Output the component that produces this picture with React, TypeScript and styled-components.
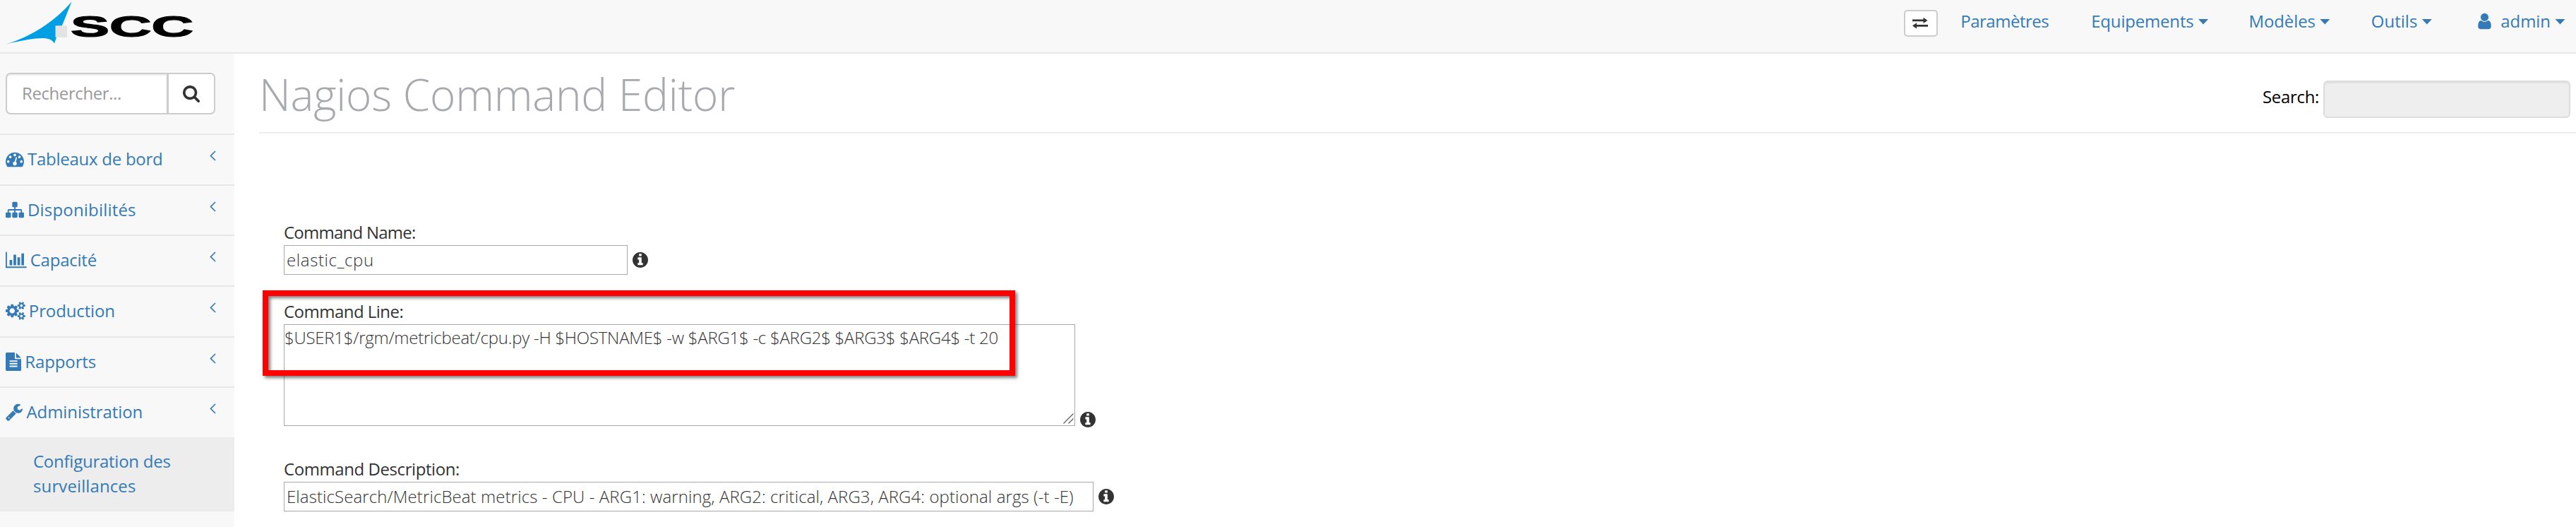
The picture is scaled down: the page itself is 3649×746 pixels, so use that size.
import React from 'react';
import styled, { createGlobalStyle } from 'styled-components';

const GlobalStyle = createGlobalStyle`
  *, *::before, *::after { box-sizing: border-box; }
  body {
    margin: 0;
    background: #fff;
    color: #333;
    font-family: "Open Sans", "Noto Sans", sans-serif;
    font-size: 24px;
    line-height: 35px;
    overflow: hidden;
  }
`;

const Page = styled.div`
  display: flex;
  flex-direction: column;
  width: 3649px;
  height: 746px;
  overflow: hidden;
`;

const TopBar = styled.header`
  display: flex;
  align-items: flex-start;
  flex: none;
  height: 76px;
  padding-right: 15px;
  background: #f8f8f8;
  border-bottom: 2px solid #e7e7e7;
`;

const Logo = styled.svg`
  display: block;
  flex: none;
  width: 290px;
  height: 74px;
`;

const NavList = styled.nav`
  display: flex;
  align-items: flex-start;
  margin-left: auto;
`;

const SwapButton = styled.button`
  display: flex;
  align-items: center;
  justify-content: center;
  width: 48px;
  height: 38px;
  margin: 14px 32px 0 0;
  padding: 0 2px 2px 0;
  background: #fff;
  border: 2px solid #ccc;
  border-radius: 5px;
`;

const NavItem = styled.a<{ $gap?: number }>`
  display: flex;
  align-items: center;
  height: 35px;
  margin-top: 12px;
  margin-left: ${(p) => p.$gap ?? 0}px;
  color: #337ab7;
`;

const Text = styled.span<{ $track?: number }>`
  white-space: nowrap;
  letter-spacing: ${(p) => p.$track ?? 0}px;
`;

const Caret = styled.span`
  width: 15px;
  height: 8px;
  margin: 2px 0 0 6px;
  background: currentColor;
  clip-path: polygon(0 0, 100% 0, 50% 100%);
`;

const UserIcon = styled.svg`
  width: 19px;
  height: 26px;
  margin-right: 13px;
`;

const Body = styled.div`
  display: flex;
  flex: 1;
  min-height: 0;
`;

const Sidebar = styled.aside`
  flex: none;
  width: 332px;
  background: #f8f8f8;
`;

const SearchBox = styled.div`
  display: flex;
  height: 115px;
  padding: 27px 27px 27px 8px;
  border-bottom: 2px solid #e7e7e7;
`;

const SearchField = styled.div`
  flex: 1;
  height: 59px;
  padding: 9px 0 0 21px;
  color: #999;
  background: #fff;
  border: 2px solid #ccc;
  border-radius: 7px 0 0 7px;
  box-shadow: inset 0 2px 2px rgba(0, 0, 0, 0.07);
`;

const SearchButton = styled.button`
  display: flex;
  align-items: center;
  justify-content: center;
  width: 69px;
  height: 59px;
  margin-left: -3px;
  padding: 0;
  background: #fff;
  border: 2px solid #ccc;
  border-left-width: 3px;
  border-radius: 0 7px 7px 0;
`;

const MenuItem = styled.div<{ $last?: boolean }>`
  display: flex;
  align-items: flex-start;
  height: ${(p) => (p.$last ? 69.6 : 71.7)}px;
  padding: 16px 26px 0 8px;
  color: #337ab7;
  border-bottom: ${(p) => (p.$last ? 'none' : '2px solid #e7e7e7')};
`;

const MenuIcon = styled.svg`
  display: block;
  flex: none;
  height: 26px;
  margin: 5px 5px 0 0;
`;

const Chevron = styled.svg`
  display: block;
  width: 9px;
  height: 15px;
  margin: 6px 0 0 auto;
`;

const SubMenu = styled.div`
  height: 105px;
  padding: 16px 0 0 47px;
  color: #337ab7;
  background: #ededed;
`;

const SubLine = styled.div<{ $track: number }>`
  letter-spacing: ${(p) => p.$track}px;
  white-space: nowrap;
`;

const Main = styled.main`
  flex: 1;
  min-width: 0;
  padding-left: 35px;
`;

const PageHead = styled.div`
  display: flex;
  justify-content: space-between;
  height: 113px;
  padding-right: 8px;
  border-bottom: 2px solid #eee;
`;

const Title = styled.h1`
  margin: 13px 0 0;
  font-size: 62px;
  font-weight: 300;
  line-height: 88px;
  letter-spacing: -0.2px;
  color: #a7a9ac;
  white-space: nowrap;
`;

const TableFilter = styled.label`
  display: flex;
  align-items: flex-start;
  gap: 6px;
  padding-top: 38px;
  color: #000;
`;

const FilterLabel = styled.span`
  padding-top: 5px;
  letter-spacing: -0.33px;
`;

const FilterInput = styled.div`
  width: 350px;
  height: 53px;
  background: #eee;
  border: 2px solid #ddd;
  border-radius: 6px;
  box-shadow: inset 0 2px 2px rgba(0, 0, 0, 0.06);
`;

const Form = styled.div`
  position: relative;
  display: flex;
  flex-direction: column;
  padding: 122px 0 0 35px;
`;

const Field = styled.div<{ $space?: number }>`
  margin-bottom: ${(p) => p.$space ?? 0}px;
`;

const FieldLabel = styled.div<{ $track: number }>`
  height: 36px;
  font-weight: 500;
  letter-spacing: ${(p) => p.$track}px;
`;

const FieldRow = styled.div<{ $align: 'center' | 'flex-end' }>`
  display: flex;
  align-items: ${(p) => p.$align};
  gap: 7px;
`;

const Input = styled.div<{ $width: number; $track: number }>`
  width: ${(p) => p.$width}px;
  height: 42px;
  padding: 2px 0 0 3px;
  font-weight: 300;
  letter-spacing: ${(p) => p.$track}px;
  white-space: nowrap;
  background: #fff;
  border: 1px solid #a9a9a9;
`;

const Area = styled.div`
  display: flex;
  align-items: flex-start;
  justify-content: space-between;
  width: 1121px;
  height: 144px;
  font-weight: 300;
  background: #fff;
  border: 1px solid #a9a9a9;
`;

const Grip = styled.svg`
  align-self: flex-end;
  width: 15px;
  height: 15px;
  margin: 0 1px 2px 0;
`;

const Info = styled.svg<{ $drop?: number }>`
  display: block;
  width: 22px;
  height: 22px;
  margin-bottom: ${(p) => -(p.$drop ?? 0)}px;
`;

const Highlight = styled.div`
  position: absolute;
  left: 5px;
  top: 222px;
  width: 1066px;
  height: 121px;
  border: 8px solid #f00;
  filter: drop-shadow(3px 3px 2px rgba(0, 0, 0, 0.5));
  pointer-events: none;
`;

const INFO =
  'M1152 1376v-160q0-14-9-23t-23-9h-96v-512q0-14-9-23t-23-9h-320q-14 0-23 9t-9 23v160q0 14 9 23t23 9h96v320h-96q-14 0-23 9t-9 23v160q0 14 9 23t23 9h448q14 0 23-9t9-23zm-128-896v-160q0-14-9-23t-23-9h-192q-14 0-23 9t-9 23v160q0 14 9 23t23 9h192q14 0 23-9t9-23zm640 416q0 209-103 385.5t-279.5 279.5-385.5 103-385.5-103-279.5-279.5-103-385.5 103-385.5 279.5-279.5 385.5-103 385.5 103 279.5 279.5 103 385.5z';

const USER =
  'M1536 1399q0 109-62.5 187t-150.5 78h-854q-88 0-150.5-78t-62.5-187q0-85 8.5-160.5t31.5-152 58.5-131 94-89 134.5-34.5q131 128 313 128t313-128q76 0 134.5 34.5t94 89 58.5 131 31.5 152 8.5 160.5zm-256-887q0 159-112.5 271.5t-271.5 112.5-271.5-112.5-112.5-271.5 112.5-271.5 271.5-112.5 271.5 112.5 112.5 271.5z';

const SEARCH =
  'M1216 832q0-185-131.5-316.5t-316.5-131.5-316.5 131.5-131.5 316.5 131.5 316.5 316.5 131.5 316.5-131.5 131.5-316.5zm512 832q0 52-38 90t-90 38q-54 0-90-38l-343-342q-179 124-399 124-143 0-273.5-55.5t-225-150-150-225-55.5-273.5 55.5-273.5 150-225 225-150 273.5-55.5 273.5 55.5 225 150 150 225 55.5 273.5q0 220-124 399l343 343q37 37 37 90z';

interface MenuEntry {
  label: string;
  track: number;
  x: number;
  w: number;
  d: string;
}

const MENU: MenuEntry[] = [
  {
    label: 'Tableaux de bord',
    track: -0.26,
    x: 0,
    w: 1792,
    d: 'M384 1152q0-53-37.5-90.5t-90.5-37.5-90.5 37.5-37.5 90.5 37.5 90.5 90.5 37.5 90.5-37.5 37.5-90.5zm192-448q0-53-37.5-90.5t-90.5-37.5-90.5 37.5-37.5 90.5 37.5 90.5 90.5 37.5 90.5-37.5 37.5-90.5zm428 481l101-382q6-26-7.5-48.5t-38.5-29.5-48 6.5-30 39.5l-101 382q-60 5-107 43.5t-63 98.5q-20 77 20 146t117 89 146-20 89-117q16-60-6-117t-72-91zm660-33q0-53-37.5-90.5t-90.5-37.5-90.5 37.5-37.5 90.5 37.5 90.5 90.5 37.5 90.5-37.5 37.5-90.5zm-640-640q0-53-37.5-90.5t-90.5-37.5-90.5 37.5-37.5 90.5 37.5 90.5 90.5 37.5 90.5-37.5 37.5-90.5zm448 192q0-53-37.5-90.5t-90.5-37.5-90.5 37.5-37.5 90.5 37.5 90.5 90.5 37.5 90.5-37.5 37.5-90.5zm320 448q0 261-141 483-19 29-54 29h-1402q-35 0-54-29-141-221-141-483 0-182 71-348t191-286 286-191 348-71 348 71 286 191 191 286 71 348z',
  },
  {
    label: 'Disponibilités',
    track: 0.18,
    x: 0,
    w: 1792,
    d: 'M1792 1248v320q0 40-28 68t-68 28h-320q-40 0-68-28t-28-68v-320q0-40 28-68t68-28h96v-192h-512v192h96q40 0 68 28t28 68v320q0 40-28 68t-68 28h-320q-40 0-68-28t-28-68v-320q0-40 28-68t68-28h96v-192h-512v192h96q40 0 68 28t28 68v320q0 40-28 68t-68 28h-320q-40 0-68-28t-28-68v-320q0-40 28-68t68-28h96v-192q0-52 38-90t90-38h512v-192h-96q-40 0-68-28t-28-68v-320q0-40 28-68t68-28h320q40 0 68 28t28 68v320q0 40-28 68t-68 28h-96v192h512q52 0 90 38t38 90v192h96q40 0 68 28t28 68z',
  },
  {
    label: 'Capacité',
    track: -0.23,
    x: 0,
    w: 2048,
    d: 'M640 896v512h-256v-512h256zm384-512v1024h-256v-1024h256zm1024 1152v128h-2048v-1536h128v1408h1920zm-640-896v768h-256v-768h256zm384-384v1152h-256v-1152h256z',
  },
  {
    label: 'Production',
    track: -0.13,
    x: 0,
    w: 1920,
    d: 'M896 896q0-106-75-181t-181-75-181 75-75 181 75 181 181 75 181-75 75-181zm768 512q0-52-38-90t-90-38-90 38-38 90q0 53 37.5 90.5t90.5 37.5 90.5-37.5 37.5-90.5zm0-1024q0-52-38-90t-90-38-90 38-38 90q0 53 37.5 90.5t90.5 37.5 90.5-37.5 37.5-90.5zm-384 421v185q0 10-7 19.5t-16 10.5l-155 24q-11 35-32 76 34 48 90 115 7 11 7 20 0 12-7 19-23 30-82.5 89.5t-78.5 59.5q-11 0-21-7l-115-90q-37 19-77 31-11 108-23 155-7 24-30 24h-186q-11 0-20-7.5t-10-17.5l-23-153q-34-10-75-31l-118 89q-7 7-20 7-11 0-21-8-144-133-144-160 0-9 7-19 10-14 41-53t47-61q-23-44-35-82l-152-24q-10-1-17-9.5t-7-19.5v-185q0-10 7-19.5t16-10.5l155-24q11-35 32-76-34-48-90-115-7-11-7-20 0-12 7-20 22-30 82-89t79-59q11 0 21 7l115 90q34-18 77-32 11-108 23-154 7-24 30-24h186q11 0 20 7.5t10 17.5l23 153q34 10 75 31l118-89q8-7 20-7 11 0 21 8 144 133 144 160 0 8-7 19-12 16-42 54t-45 60q23 48 34 82l152 23q10 2 17 10.5t7 19.5zm640 533v140q0 16-149 31-12 27-30 52 51 113 51 138 0 4-4 7-122 71-124 71-8 0-46-47t-52-68q-20 2-30 2t-30-2q-14 21-52 68t-46 47q-2 0-124-71-4-3-4-7 0-25 51-138-18-25-30-52-149-15-149-31v-140q0-16 149-31 13-29 30-52-51-113-51-138 0-4 4-7 4-2 35-20t59-34 30-16q8 0 46 46.5t52 67.5q20-2 30-2t30 2q51-71 92-112l6-2q4 0 124 70 4 3 4 7 0 25-51 138 17 23 30 52 149 15 149 31zm0-1024v140q0 16-149 31-12 27-30 52 51 113 51 138 0 4-4 7-122 71-124 71-8 0-46-47t-52-68q-20 2-30 2t-30-2q-14 21-52 68t-46 47q-2 0-124-71-4-3-4-7 0-25 51-138-18-25-30-52-149-15-149-31v-140q0-16 149-31 13-29 30-52-51-113-51-138 0-4 4-7 4-2 35-20t59-34 30-16q8 0 46 46.5t52 67.5q20-2 30-2t30 2q51-71 92-112l6-2q4 0 124 70 4 3 4 7 0 25-51 138 17 23 30 52 149 15 149 31z',
  },
  {
    label: 'Rapports',
    track: -0.12,
    x: 128,
    w: 1536,
    d: 'M1596 476q14 14 28 36h-472v-472q22 14 36 28zm-476 164h544v1056q0 40-28 68t-68 28h-1344q-40 0-68-28t-28-68v-1600q0-40 28-68t68-28h800v544q0 40 28 68t68 28zm160 736v-64q0-14-9-23t-23-9h-704q-14 0-23 9t-9 23v64q0 14 9 23t23 9h704q14 0 23-9t9-23zm0-256v-64q0-14-9-23t-23-9h-704q-14 0-23 9t-9 23v64q0 14 9 23t23 9h704q14 0 23-9t9-23zm0-256v-64q0-14-9-23t-23-9h-704q-14 0-23 9t-9 23v64q0 14 9 23t23 9h704q14 0 23-9t9-23z',
  },
  {
    label: 'Administration',
    track: -0.08,
    x: 64,
    w: 1690,
    d: 'M448 1472q0-26-19-45t-45-19-45 19-19 45 19 45 45 19 45-19 19-45zm644-420l-682 682q-37 37-90 37-52 0-91-37l-106-108q-38-36-38-90 0-53 38-91l681-681q39 98 114.5 173.5t173.5 114.5zm634-435q0 39-23 106-47 134-164.5 217.5t-258.5 83.5q-185 0-316.5-131.5t-131.5-316.5 131.5-316.5 316.5-131.5q58 0 121.5 16.5t107.5 46.5q16 11 16 28t-16 28l-293 169v224l193 107q5-3 79-48.5t135.5-81 70.5-35.5q15 0 23.5 10t8.5 25z',
  },
];

const InfoIcon = ({ drop }: { drop?: number }) => (
  <Info $drop={drop} viewBox="128 128 1536 1536" fill="#333">
    <path d={INFO} />
  </Info>
);

export default function App() {
  return (
    <Page>
      <GlobalStyle />
      <TopBar>
        <Logo viewBox="0 0 290 74">
          <path
            d="M101.5 2.5C78 30 44 52 8 62.7C36 56 56 53 66 54.5C72 55.5 75 58 77 61.5L80 53L88 36Z"
            fill="#009fe3"
          />
          <rect x="78.5" y="36.3" width="16.5" height="16.5" fill="#e3e3e3" />
          <text
            x="100"
            y="52"
            fontFamily="Liberation Sans, sans-serif"
            fontWeight="700"
            fontSize="42"
            textLength="174"
            lengthAdjust="spacingAndGlyphs"
            stroke="#000"
            strokeWidth="1.2"
          >
            SCC
          </text>
        </Logo>
        <NavList>
          <SwapButton>
            <svg width="22" height="17" viewBox="0 0 22 17" fill="#333">
              <path d="M0 3.5H15.5V0.8L21.5 4.9L15.5 9V6.2H0Z" />
              <path d="M22 11H6V8.3L0 12.4L6 16.5V13.7H22Z" />
            </svg>
          </SwapButton>
          <NavItem>
            <Text $track={-0.49}>Paramètres</Text>
          </NavItem>
          <NavItem $gap={60}>
            <Text $track={-0.19}>Equipements</Text>
            <Caret />
          </NavItem>
          <NavItem $gap={57}>
            <Text $track={-0.12}>Modèles</Text>
            <Caret />
          </NavItem>
          <NavItem $gap={58}>
            <Text>Outils</Text>
            <Caret />
          </NavItem>
          <NavItem $gap={65}>
            <UserIcon viewBox="256 0 1280 1792" fill="currentColor">
              <path d={USER} />
            </UserIcon>
            <Text $track={-0.07}>admin</Text>
            <Caret />
          </NavItem>
        </NavList>
      </TopBar>
      <Body>
        <Sidebar>
          <SearchBox>
            <SearchField>
              <Text $track={-0.41}>Rechercher...</Text>
            </SearchField>
            <SearchButton>
              <svg width="24" height="24" viewBox="64 128 1664 1664" fill="#333">
                <path d={SEARCH} />
              </svg>
            </SearchButton>
          </SearchBox>
          {MENU.map((m, i) => (
            <MenuItem key={m.label} $last={i === MENU.length - 1}>
              <MenuIcon viewBox={`${m.x} 0 ${m.w} 1792`} fill="currentColor">
                <path d={m.d} />
              </MenuIcon>
              <Text $track={m.track}>{m.label}</Text>
              <Chevron viewBox="0 0 9 15" fill="none" stroke="currentColor" strokeWidth="1.7">
                <path d="M8 1L1.5 7.5L8 14" />
              </Chevron>
            </MenuItem>
          ))}
          <SubMenu>
            <SubLine $track={-0.25}>Configuration des</SubLine>
            <SubLine $track={0.11}>surveillances</SubLine>
          </SubMenu>
        </Sidebar>
        <Main>
          <PageHead>
            <Title>Nagios Command Editor</Title>
            <TableFilter>
              <FilterLabel>Search:</FilterLabel>
              <FilterInput />
            </TableFilter>
          </PageHead>
          <Form>
            <Field $space={34}>
              <FieldLabel $track={-0.76}>Command Name:</FieldLabel>
              <FieldRow $align="center">
                <Input $width={487} $track={0.61}>elastic_cpu</Input>
                <InfoIcon />
              </FieldRow>
            </Field>
            <Field $space={43}>
              <FieldLabel $track={-0.52}>Command Line:</FieldLabel>
              <FieldRow $align="flex-end">
                <Area>
                  <Text $track={-0.25}>
                    $USER1$/rgm/metricbeat/cpu.py -H $HOSTNAME$ -w $ARG1$ -c $ARG2$ $ARG3$ $ARG4$ -t 20
                  </Text>
                  <Grip viewBox="0 0 15 15" stroke="#555" strokeWidth="1.1">
                    <path d="M0.5 14.5L14.5 0.5M7.5 14.5L14.5 7.5" />
                  </Grip>
                </Area>
                <InfoIcon drop={2} />
              </FieldRow>
            </Field>
            <Field>
              <FieldLabel $track={-0.43}>Command Description:</FieldLabel>
              <FieldRow $align="center">
                <Input $width={1147} $track={0.09}>
                  ElasticSearch/MetricBeat metrics - CPU - ARG1: warning, ARG2: critical, ARG3, ARG4: optional args (-t -E)
                </Input>
                <InfoIcon />
              </FieldRow>
            </Field>
            <Highlight />
          </Form>
        </Main>
      </Body>
    </Page>
  );
}
